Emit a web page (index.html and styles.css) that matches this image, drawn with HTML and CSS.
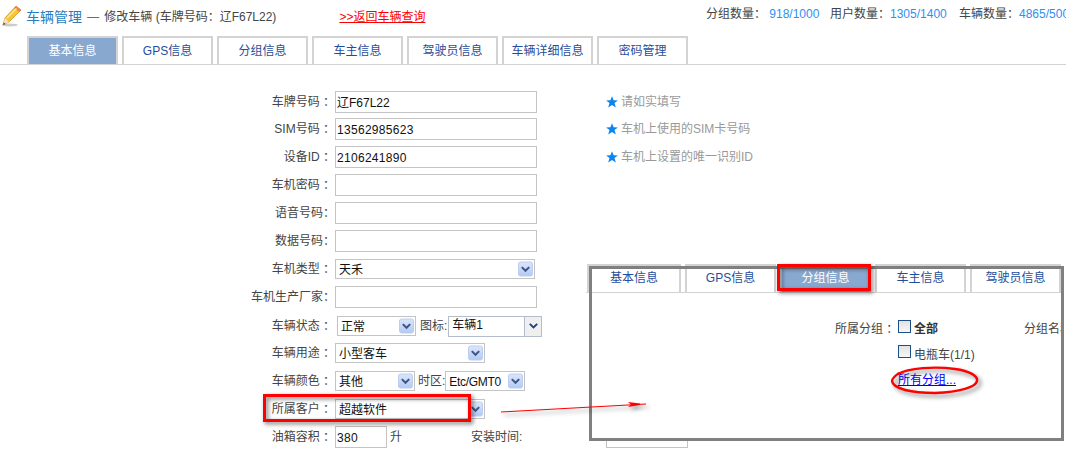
FILE: index.html
```html
<!DOCTYPE html>
<html lang="zh">
<head>
<meta charset="utf-8">
<title>车辆管理</title>
<link rel="stylesheet" href="styles.css">
</head>
<body>
<svg class="defs" width="0" height="0" aria-hidden="true">
  <defs>
    <linearGradient id="btn" x1="0" y1="0" x2="0" y2="1"><stop offset="0" stop-color="#dbe6fb"/><stop offset="1" stop-color="#b4c9f3"/></linearGradient>
    <symbol id="chev" viewBox="0 0 15 15"><rect x=".5" y=".5" width="14" height="14" rx="2" fill="url(#btn)" stroke="#bccdf0"/><path d="M3.8 5.6 7.5 9.3 11.2 5.6" fill="none" stroke="#3f5683" stroke-width="2"/></symbol>
    <symbol id="star" viewBox="0 0 12 12"><path d="M6 .2 7.6 4.2 11.9 4.4 8.5 7.1 9.8 11.5 6 9.1 2.2 11.5 3.5 7.1.1 4.4 4.4 4.2Z" fill="#0a84ee"/></symbol>
  </defs>
</svg>
<div class="page">
  <header class="head">
    <svg class="pencil" width="20" height="22" viewBox="0 0 20 22" aria-hidden="true">
      <ellipse cx="8" cy="20" rx="8" ry="1.4" fill="#ccc"/>
      <path d="M1 20 3 13 14 1 19 5 7 17Z" fill="#f7c531" stroke="#c98a18" stroke-width=".7"/>
      <path d="M14 1 19 5 17.3 7 12.2 3Z" fill="#e8834f"/>
      <path d="M1 20 3 13 7 17Z" fill="#f4e3c2"/>
      <path d="M1 20 1.8 17.5 3.5 18.9Z" fill="#444"/>
      <path d="M5 13 14.5 3.5" stroke="#fbe79a" stroke-width="1.4"/>
    </svg>
    <h1 class="title">车辆管理</h1>
    <span class="sub"><b class="dash">—</b> 修改车辆 (车牌号码：辽F67L22)</span>
    <a class="back" href="#">&gt;&gt;返回车辆查询</a>
    <div class="stats">
      <span class="stat stat-a">分组数量： <em>918/1000</em></span>
      <span class="stat stat-b">用户数量：<em>1305/1400</em></span>
      <span class="stat stat-c">车辆数量：<em>4865/5000</em></span>
    </div>
  </header>

  <nav class="tabs tabs-main">
    <a class="tab on">基本信息</a><a class="tab">GPS信息</a><a class="tab">分组信息</a><a class="tab">车主信息</a><a class="tab">驾驶员信息</a><a class="tab">车辆详细信息</a><a class="tab">密码管理</a>
  </nav>

  <form class="form">
    <div class="row tight"><label class="lab">车牌号码 ：</label><span class="inp">辽F67L22</span><p class="hint"><svg class="star"><use href="#star"/></svg>请如实填写</p></div>
    <div class="row"><label class="lab">SIM号码 ：</label><span class="inp digits">13562985623</span><p class="hint"><svg class="star"><use href="#star"/></svg>车机上使用的SIM卡号码</p></div>
    <div class="row"><label class="lab">设备ID ：</label><span class="inp digits">2106241890</span><p class="hint"><svg class="star"><use href="#star"/></svg>车机上设置的唯一识别ID</p></div>
    <div class="row"><label class="lab">车机密码 ：</label><span class="inp"></span></div>
    <div class="row"><label class="lab">语音号码：</label><span class="inp"></span></div>
    <div class="row"><label class="lab">数据号码：</label><span class="inp"></span></div>
    <div class="row"><label class="lab">车机类型 ：</label><span class="sel w200"><span class="val">天禾</span><svg class="chev"><use href="#chev"/></svg></span></div>
    <div class="row loose"><label class="lab">车机生产厂家：</label><span class="inp"></span></div>
    <div class="row tight"><label class="lab">车辆状态 ：</label><span class="sel w79 ml2"><span class="val">正常</span><svg class="chev"><use href="#chev"/></svg></span><span class="txt ml4">图标:</span><span class="combo"><span class="val">车辆1</span><span class="combo-btn"><svg width="9" height="6" viewBox="0 0 9 6"><path d="M.8.8 4.5 4.5 8.2.8" fill="none" stroke="#1f3f7d" stroke-width="1.8"/></svg></span></span></div>
    <div class="row"><label class="lab">车辆用途 ：</label><span class="sel w150"><span class="val">小型客车</span><svg class="chev"><use href="#chev"/></svg></span></div>
    <div class="row"><label class="lab">车辆颜色 ：</label><span class="sel w80"><span class="val">其他</span><svg class="chev"><use href="#chev"/></svg></span><span class="txt ml3">时区:</span><span class="sel w80"><span class="val tz">Etc/GMT0</span><svg class="chev"><use href="#chev"/></svg></span></div>
    <div class="row"><label class="lab">所属客户 ：</label><span class="sel w150"><span class="val">超越软件</span><svg class="chev"><use href="#chev"/></svg></span></div>
    <div class="row"><label class="lab">油箱容积 ：</label><span class="inp digits w52">380</span><span class="txt ml3">升</span><span class="txt install">安装时间:</span><span class="inp w82 ml84"></span></div>
  </form>

  <div class="snippet">
    <nav class="tabs tabs-snip">
      <a class="tab">基本信息</a><a class="tab">GPS信息</a><a class="tab on">分组信息</a><a class="tab">车主信息</a><a class="tab">驾驶员信息</a>
    </nav>
    <div class="group">
      <div class="group-row"><span class="txt group-lab">所属分组 ：</span><i class="check"></i><b class="all">全部</b><span class="txt group-name">分组名称</span></div>
      <div class="group-row row-two"><i class="check"></i><span class="txt">电瓶车(1/1)</span></div>
      <div class="group-row row-three"><a class="all-link" href="#">所有分组...</a></div>
    </div>
  </div>
  <div class="frame"></div>

  <div class="mark mark-tab"></div>
  <div class="mark mark-customer"></div>
  <svg class="notes" width="1066" height="451" viewBox="0 0 1066 451" aria-hidden="true">
    <path d="M898 374C908 368 935 366 955 369 970 371 978 376 977 381 976 387 960 392 935 393 912 393 893 389 892 381 892 378 895 376 899 373" fill="none" stroke="#f00" stroke-width="2.4"/>
    <path d="M501 412 L646 404" fill="none" stroke="#f00" stroke-width="1"/>
    <path d="M628 402 L640 403.5 L640 405 L628 407 L631 404.5Z" fill="#f00"/>
  </svg>
</div>
</body>
</html>
```
FILE: styles.css
```css
* { box-sizing: border-box; }
html, body { margin: 0; height: 100%; background: #fff; overflow: hidden; }
body { font: 12px/1.2 "Liberation Sans", "Noto Sans CJK SC", sans-serif; color: #444; }
.defs { position: absolute; }
.page { position: relative; width: 1066px; height: 451px; overflow: hidden; }

.head { display: flex; height: 36px; padding-left: 2px; white-space: nowrap; }
.pencil { margin-top: 5px; flex: none; }
.title { margin: 7px 0 0 4px; font-size: 14px; font-weight: 400; line-height: 20px; color: #2a7cc0; }
.sub { margin: 7px 0 0 5px; line-height: 20px; color: #444; }
.dash { margin-right: 2px; font-weight: 400; color: #2a7cc0; }
.back { margin: 7px 0 0 0; position: relative; left: 63px; line-height: 20px; color: #f00; text-decoration: underline; }
.stats { position: absolute; top: 5px; left: 706px; display: flex; line-height: 18px; }
.stat { flex: none; }
.stat em { font-style: normal; color: #2f8fef; }
.stat-a { width: 124px; }
.stat-b { width: 129px; }

.tabs { display: flex; gap: 4px; height: 29px; border-bottom: 1px solid #d3d3d3; }
.tabs-main { padding-left: 27px; }
.tab { flex: none; width: 91px; height: 28px; border: 2px solid #d3d3d3; border-bottom: 0; line-height: 27px; text-align: center; color: #1f4e9c; }
.tab.on { background: #88a8cf; color: #fff; }

.form { padding: 26px 0 0 250px; }
.row { display: flex; align-items: center; height: 22px; margin-bottom: 6px; white-space: nowrap; }
.tight { margin-bottom: 5px; }
.loose { margin-bottom: 7px; }
.lab { width: 85px; flex: none; padding-top: 1px; text-align: right; color: #444; }
.txt { padding-top: 1px; color: #444; }
.inp { flex: none; width: 202px; height: 22px; border: 1px solid #c4c4c4; background: #fff; padding: 1px 0 0 1px; line-height: 20px; color: #111; }
.digits { letter-spacing: .3px; }
.w52 { width: 52px; }
.w82 { width: 82px; }
.ml84 { margin-left: 84px; }
.hint { display: flex; align-items: center; margin: 0 0 0 69px; padding-top: 1px; color: #999; }
.star { width: 12px; height: 12px; margin-right: 3px; }

.sel { flex: none; display: flex; align-items: center; justify-content: space-between; height: 20px; border: 1px solid #c4c4c4; background: #fff; padding: 0 1px 0 3px; color: #111; }
.val { padding-top: 1px; line-height: 18px; }
.tz { letter-spacing: -.3px; }
.chev { width: 15px; height: 16px; flex: none; }
.w200 { width: 200px; }
.w150 { width: 150px; }
.w79 { width: 79px; }
.w80 { width: 80px; }
.ml2 { margin-left: 2px; }
.ml3 { margin-left: 3px; }
.ml4 { margin-left: 4px; }
.install { margin-left: 69px; }
.combo { flex: none; display: flex; justify-content: space-between; width: 94px; height: 21px; margin-left: 1px; border: 1px solid #b3bdcb; background: #fff; padding-left: 3px; color: #111; }
.combo .val { padding-top: 0; line-height: 17px; }
.combo-btn { display: flex; align-items: center; justify-content: center; width: 17px; border-left: 1px solid #b3bdcb; background: #efefef; }

.snippet { position: absolute; left: 586px; top: 264px; width: 478px; height: 177px; background: #fff; overflow: hidden; }
.tabs-snip { padding-left: 1px; }
.tabs-snip .tab { line-height: 25px; }
.tabs-snip .tab:first-child { width: 94px; }
.group { display: grid; padding: 23px 0 0 249px; grid-auto-rows: 26px; }
.group-row { display: flex; align-items: center; padding-left: 63px; white-space: nowrap; }
.group-row:first-child { padding-left: 0; }
.group-lab { width: 63px; padding-top: 0; }
.check { flex: none; width: 13px; height: 13px; margin: 0 3px 5px 0; border: 1px solid #1c4f86; background: linear-gradient(#e2e2e2, #f6f6f6); }
.row-two .check { margin-bottom: 7px; }
.row-two .txt { padding-top: 0; }
.row-three { padding-bottom: 2px; }
.all { width: 110px; color: #333; }
.group-name { flex: none; padding-top: 0; }
.all-link { color: #00f; text-decoration: underline; }

.frame { position: absolute; left: 589px; top: 266px; width: 475px; height: 175px; border: 3px solid #808080; }
.mark { position: absolute; border: 3px solid #f00; filter: drop-shadow(2px 2px 2px rgba(0, 0, 0, .55)); }
.mark-tab { left: 777px; top: 264px; width: 94px; height: 27px; }
.mark-customer { left: 263px; top: 394px; width: 208px; height: 28px; }
.notes { position: absolute; left: 0; top: 0; filter: drop-shadow(3px 3px 2px rgba(0, 0, 0, .45)); }
```
